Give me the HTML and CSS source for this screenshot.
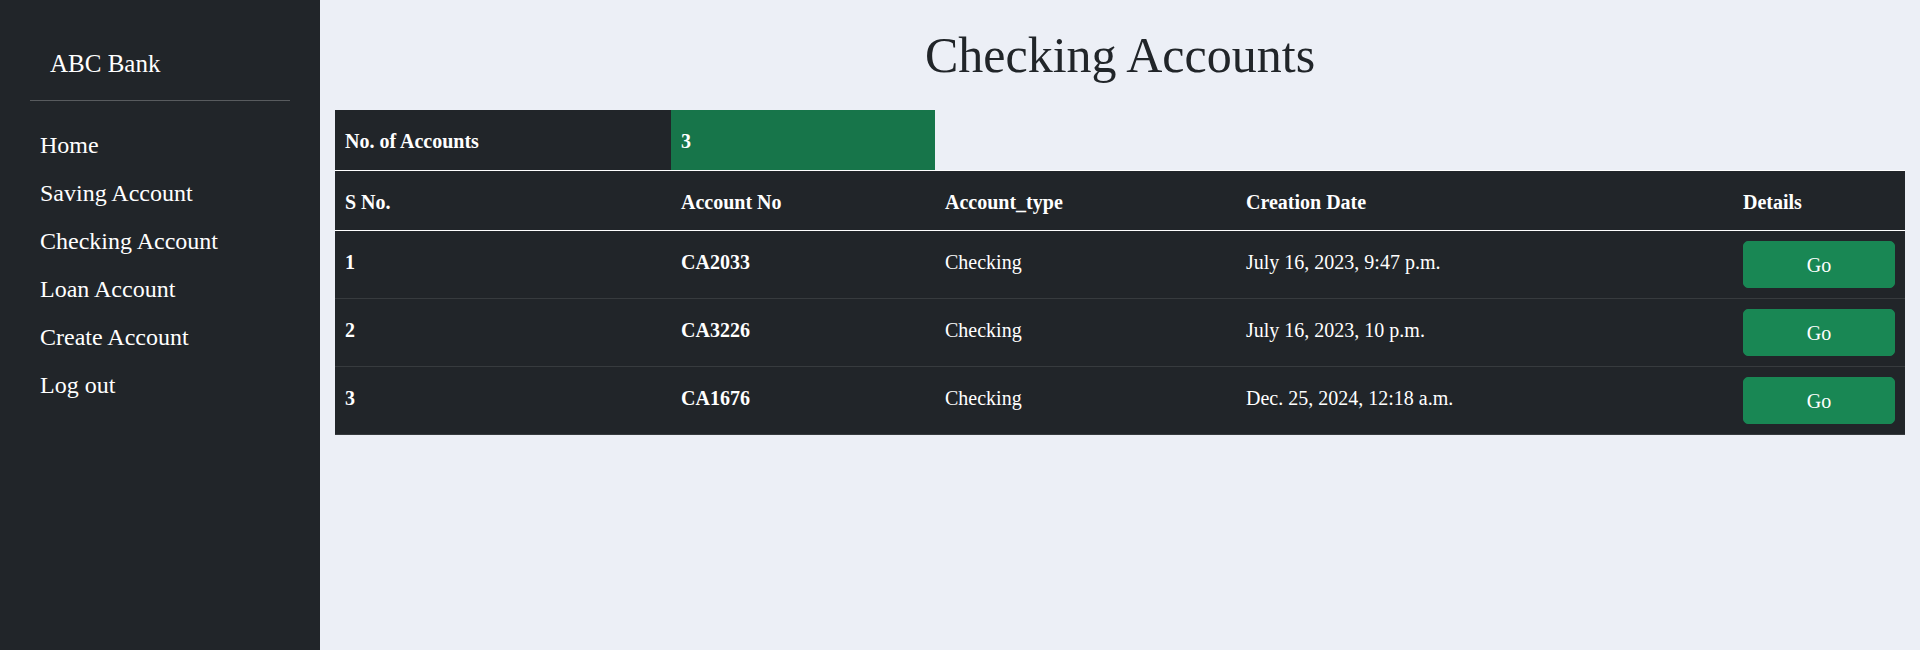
FILE: index.html
```html
<!DOCTYPE html>
<html lang="en">
<head>
<meta charset="utf-8">
<title>Checking Accounts</title>
<link rel="stylesheet" href="styles.css">
</head>
<body>
<div class="layout">
  <aside class="sidebar">
    <div class="brand">ABC Bank</div>
    <hr class="divider">
    <ul class="nav">
      <li><a class="nav-link" href="#">Home</a></li>
      <li><a class="nav-link" href="#">Saving Account</a></li>
      <li><a class="nav-link" href="#">Checking Account</a></li>
      <li><a class="nav-link" href="#">Loan Account</a></li>
      <li><a class="nav-link" href="#">Create Account</a></li>
      <li><a class="nav-link" href="#">Log out</a></li>
    </ul>
  </aside>
  <main class="main">
    <h1 class="title">Checking Accounts</h1>
    <table class="accounts">
      <colgroup>
        <col class="col-sno">
        <col class="col-acc">
        <col class="col-type">
        <col class="col-date">
        <col class="col-details">
      </colgroup>
      <tbody class="summary">
        <tr>
          <th class="cell">No. of Accounts</th>
          <td class="cell count">3</td>
        </tr>
      </tbody>
      <tbody class="head">
        <tr>
          <th class="cell">S No.</th>
          <th class="cell">Account No</th>
          <th class="cell">Account_type</th>
          <th class="cell">Creation Date</th>
          <th class="cell">Details</th>
        </tr>
      </tbody>
      <tbody class="body">
        <tr>
          <th class="cell">1</th>
          <td class="cell strong">CA2033</td>
          <td class="cell">Checking</td>
          <td class="cell">July 16, 2023, 9:47 p.m.</td>
          <td class="cell btn-cell"><button class="go-btn">Go</button></td>
        </tr>
        <tr>
          <th class="cell">2</th>
          <td class="cell strong">CA3226</td>
          <td class="cell">Checking</td>
          <td class="cell">July 16, 2023, 10 p.m.</td>
          <td class="cell btn-cell"><button class="go-btn">Go</button></td>
        </tr>
        <tr>
          <th class="cell">3</th>
          <td class="cell strong">CA1676</td>
          <td class="cell">Checking</td>
          <td class="cell">Dec. 25, 2024, 12:18 a.m.</td>
          <td class="cell btn-cell"><button class="go-btn">Go</button></td>
        </tr>
      </tbody>
    </table>
  </main>
</div>
</body>
</html>
```

FILE: styles.css
```css
html, body {
  margin: 0;
  padding: 0;
}

body {
  font-family: "Liberation Serif", "Times New Roman", serif;
  font-size: 20px;
  background: #eceff6;
  color: #212529;
}

.layout {
  display: flex;
  min-height: 650px;
}

.sidebar {
  width: 320px;
  flex: 0 0 320px;
  box-sizing: border-box;
  background: #212529;
  padding: 45px 30px 0;
  color: #fff;
}

.brand {
  padding-left: 20px;
  font-size: 25px;
  line-height: 38px;
  color: #fff;
}

.divider {
  margin: 17px 0 20px;
  border: 0;
  height: 0;
  border-top: 1px solid rgba(255, 255, 255, 0.25);
}

.nav {
  list-style: none;
  margin: 0;
  padding: 0;
}

.nav-link {
  display: block;
  padding: 6px 10px;
  font-size: 24px;
  line-height: 36px;
  color: #fff;
  text-decoration: none;
}

.main {
  flex: 1;
  min-width: 0;
  padding: 25px 15px 0;
}

.title {
  margin: 0 0 25px;
  font-size: 50px;
  line-height: 60px;
  font-weight: 400;
  text-align: center;
  color: #212529;
}

.accounts {
  width: 1570px;
  table-layout: fixed;
  border-collapse: collapse;
  border-spacing: 0;
  color: #fff;
}

.col-sno { width: 336px; }
.col-acc { width: 264px; }
.col-type { width: 301px; }
.col-date { width: 497px; }
.col-details { width: 172px; }

.cell {
  background: #212529;
  padding: 11px 10px 9px;
  line-height: 40px;
  text-align: left;
  vertical-align: top;
  font-weight: 400;
}

th.cell,
.strong {
  font-weight: 700;
}

.summary .cell {
  font-weight: 700;
}

.count {
  background: #17754a;
}

.head .cell {
  border-top: 1px solid #fff;
  border-bottom: 1px solid #fff;
  padding-bottom: 8px;
}

.body .cell {
  border-bottom: 1px solid #373b3e;
}

.btn-cell {
  padding: 10px 10px;
}

.go-btn {
  display: block;
  width: 100%;
  box-sizing: border-box;
  height: 47px;
  padding: 7px 15px;
  border: 1px solid #198754;
  border-radius: 5px;
  background: #198754;
  color: #fff;
  font-family: "Liberation Serif", "Times New Roman", serif;
  font-size: 20px;
  line-height: 30px;
  cursor: pointer;
}
```
